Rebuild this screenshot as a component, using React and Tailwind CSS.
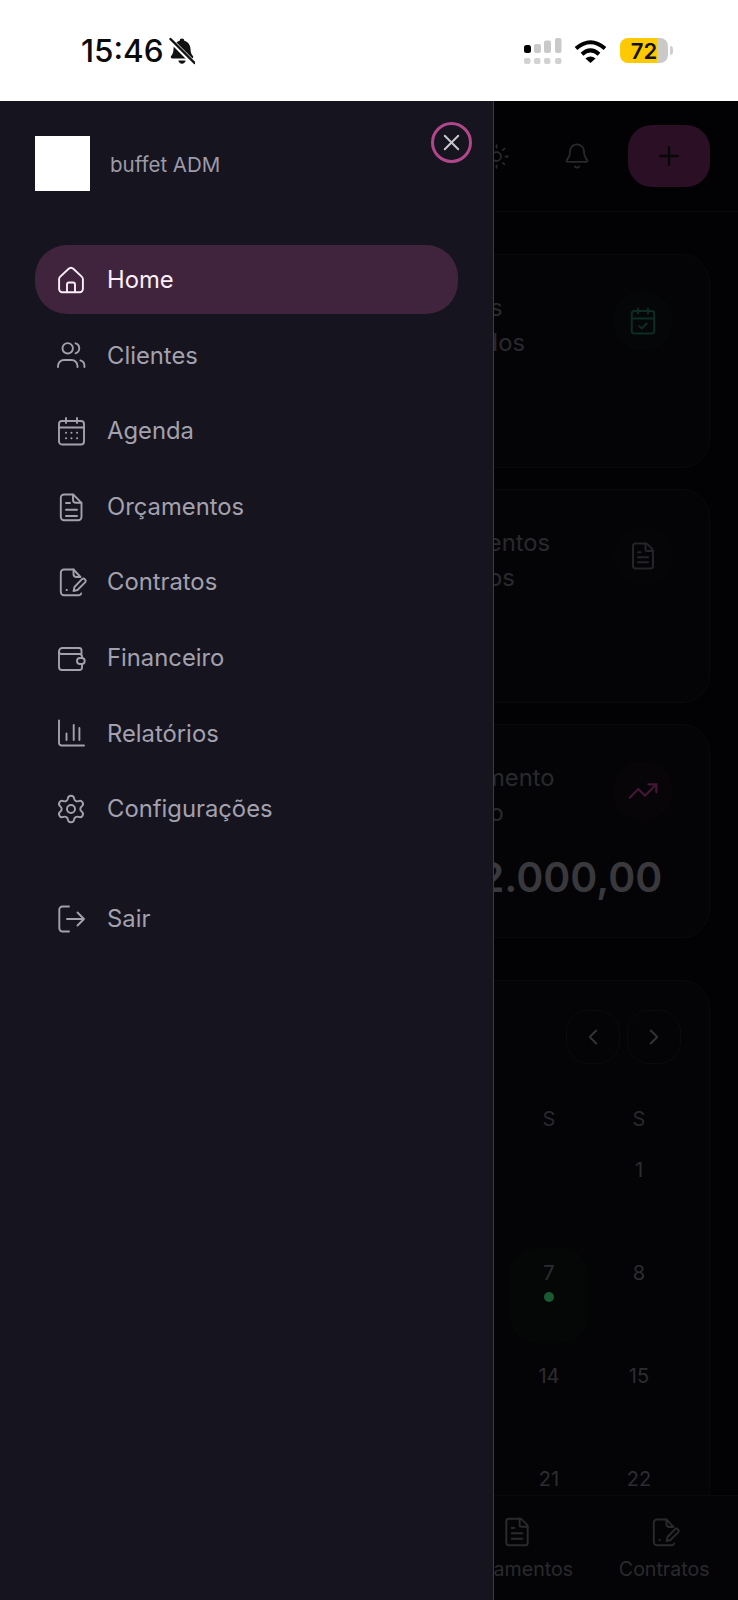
import React from "react";
import { Settings, Sun, Bell, Plus, CalendarCheck, FileText, TrendingUp, ChevronLeft, ChevronRight, X, House, Users, Calendar } from "lucide-react";

const Ico = ({ children }) => (
  <svg width="32" height="32" viewBox="0 0 32 32" fill="none" stroke="currentColor" strokeWidth="1.9" strokeLinecap="round" strokeLinejoin="round" className="shrink-0">
    {children}
  </svg>
);

const HomeI = () => (
  <Ico>
    <path d="M5.3 12.6 13.4 5a3.8 3.8 0 0 1 5.2 0l8.1 7.6a3.5 3.5 0 0 1 1.2 2.6V25a3.2 3.2 0 0 1-3.2 3.2H7.3A3.2 3.2 0 0 1 4.1 25v-9.8c0-1 .4-2 1.2-2.6Z" />
    <path d="M12 28v-7.5a2 2 0 0 1 2-2h4a2 2 0 0 1 2 2V28" />
  </Ico>
);
const UsersI = () => (
  <Ico>
    <circle cx="12.7" cy="9.3" r="5.2" />
    <path d="M3 28v-1a6 6 0 0 1 6-6h7.5a6 6 0 0 1 6 6v1" />
    <path d="M20.5 4.3a5.2 5.2 0 0 1 0 10" />
    <path d="M25.4 21.4a5.6 5.6 0 0 1 4 5.6v1" />
  </Ico>
);
const CalI = () => (
  <Ico>
    <rect x="4" y="6" width="25" height="23.5" rx="3" />
    <path d="M11 3v5M22 3v5M4 12.5h25" />
    <path d="M11 17.8h.1M16.4 17.8h.1M22 17.8h.1M11 23.2h.1M16.4 23.2h.1M22 23.2h.1" strokeWidth="2" />
  </Ico>
);
const FileI = () => (
  <Ico>
    <path d="M9 3.5h9.2l8.3 8.3V26a3.2 3.2 0 0 1-3.2 3.2H9A3.2 3.2 0 0 1 5.8 26V6.7A3.2 3.2 0 0 1 9 3.5Z" />
    <path d="M18 3.7v5.1a3 3 0 0 0 3 3h5.3" />
    <path d="M11 12h4M11 18.8h11M11 25h11" />
  </Ico>
);
const PenI = () => (
  <Ico>
    <path d="M25.5 11 18.5 3.5H9A3.2 3.2 0 0 0 5.8 6.7V26A3.2 3.2 0 0 0 9 29.2h15a2.4 2.4 0 0 0 2.2-1.7" />
    <path d="M18.5 3.5V8a3 3 0 0 0 3 3h3" />
    <path d="M11.7 24h.1" strokeWidth="2.2" />
    <path d="M27 13.2a2.2 2.2 0 0 1 3.1 3.1L22.5 24l-4 1 1-4Z" />
  </Ico>
);
const WalletI = () => (
  <Ico>
    <path d="M4 9.5V25a3 3 0 0 0 3 3h17.5a2.5 2.5 0 0 0 2.5-2.5V22" />
    <path d="M27 16v-1.5a2.5 2.5 0 0 0-2.5-2.5H6.5A2.5 2.5 0 0 1 4 9.5 3.5 3.5 0 0 1 7.5 6H24a2.5 2.5 0 0 1 2.5 2.5V12" />
    <rect x="22" y="16" width="7.7" height="6" rx="3" />
  </Ico>
);
const ChartI = () => (
  <Ico>
    <path d="M4 3.5V26a2.5 2.5 0 0 0 2.5 2.5H29" />
    <path d="M11.5 16.5V23M18.7 8v15M24.4 11v12" />
  </Ico>
);
const LogoutI = () => (
  <Ico>
    <path d="M14 3.5H7.5A3.2 3.2 0 0 0 4.3 6.7v18.6a3.2 3.2 0 0 0 3.2 3.2H14" />
    <path d="M12 16h17M22.5 9.5 29 16l-6.5 6.5" />
  </Ico>
);

const menu = [
  { label: "Home", Icon: HomeI, active: true },
  { label: "Clientes", Icon: UsersI },
  { label: "Agenda", Icon: CalI },
  { label: "Orçamentos", Icon: FileI },
  { label: "Contratos", Icon: PenI },
  { label: "Financeiro", Icon: WalletI },
  { label: "Relatórios", Icon: ChartI },
  { label: "Configurações", Icon: () => <Settings size={32} strokeWidth={1.45} className="shrink-0" /> },
];

const NavRow = ({ label, Icon, active }) => (
  <div className={`flex h-[69px] items-center gap-[20px] rounded-[32px] pl-[20px] text-[23.8px] ${active ? "bg-[#40233c] text-[#fbeff8]" : "text-[#a3a1ae]"}`}>
    <Icon />
    <span>{label}</span>
  </div>
);

const StatCard = ({ lines, value, children, tile }) => (
  <div className="flex h-[214px] shrink-0 items-start justify-between rounded-[28px] border border-[#0a0a0e] bg-[#040407] pl-[384px] pr-[36px] pt-[35px]">
    <div className="min-w-0 flex-1">
      <div className="text-[23.8px] leading-[35px] text-[#29292d]">
        <div>{lines[0]}</div>
        <div>{lines[1]}</div>
      </div>
      {value && <div className="ml-[2px] mt-[22px] whitespace-nowrap text-[41px] font-semibold leading-[50px] text-[#39393d]">{value}</div>}
    </div>
    <div className={`mt-[1px] flex h-[60px] w-[60px] shrink-0 items-center justify-center rounded-full ${tile}`}>{children}</div>
  </div>
);

const weeks = [
  ["", "", "", "", "", "", "1"],
  ["2", "3", "4", "5", "6", "7", "8"],
  ["9", "10", "11", "12", "13", "14", "15"],
  ["16", "17", "18", "19", "20", "21", "22"],
];

const SignalBars = () => (
  <svg width="38" height="26" viewBox="0 0 38 26" className="shrink-0">
    <rect x="0" y="7" width="7" height="8" rx="2.5" fill="#000" />
    <rect x="10" y="6" width="7" height="9" rx="2" fill="#c9c9c9" />
    <rect x="20" y="2.5" width="7" height="12.5" rx="2" fill="#c9c9c9" />
    <rect x="31" y="0" width="6.5" height="15" rx="2" fill="#c9c9c9" />
    {[0, 10, 20, 31].map((x) => (
      <rect key={x} x={x} y="20" width="6.5" height="6" rx="2" fill="#d2d2d2" />
    ))}
  </svg>
);

const Wifi = () => (
  <svg width="33" height="24" viewBox="0 0 33 24" fill="none" className="shrink-0">
    <path d="M2 9.5Q16.5-3 31 9.5" stroke="#000" strokeWidth="4" />
    <path d="M8 15.2Q16.5 7.5 25 15.2" stroke="#000" strokeWidth="4" />
    <path d="M11.4 19.4 16.5 24l5.1-4.6Q16.5 15.4 11.4 19.4Z" fill="#000" />
  </svg>
);

const BellOff = () => (
  <svg width="26" height="28" viewBox="0 0 26 28" className="shrink-0">
    <path d="M13 1.5c1.3 0 2.2.9 2.3 2.2 3.9 1 6 4.2 6.2 8.4.1 3.6 1 5.4 2.4 7 .8 1 .2 2.4-1.2 2.4H3.3c-1.4 0-2-1.4-1.2-2.4 1.4-1.6 2.3-3.4 2.4-7 .2-4.2 2.3-7.4 6.2-8.4.1-1.3 1-2.2 2.3-2.2Z" fill="#111" />
    <path d="M9.3 23.5h7.4c-.4 2-1.8 3.2-3.7 3.2s-3.3-1.2-3.7-3.2Z" fill="#111" />
    <path d="M1 2.5 25 26.5" stroke="#fff" strokeWidth="5" />
    <path d="M1.5 2 25.5 26" stroke="#111" strokeWidth="2.4" strokeLinecap="round" />
  </svg>
);

export default function App() {
  return (
    <div className="relative flex h-[1600px] w-[738px] flex-col overflow-hidden bg-[#020204] font-['Inter',sans-serif]">
      <div className="flex h-[101px] shrink-0 items-center justify-between bg-white pl-[81px] pr-[65px]">
        <div className="flex items-center gap-[5px]">
          <span className="text-[31.5px] font-medium leading-none text-[#0b0b0b]">15:46</span>
          <BellOff />
        </div>
        <div className="flex items-center">
          <SignalBars />
          <span className="ml-[12px]"><Wifi /></span>
          <div className="ml-[13px] flex h-[25px] w-[48px] items-center justify-center rounded-[8px] bg-[linear-gradient(90deg,#fdc900_77%,#c9c9c9_77%)] text-[22px] font-semibold leading-none text-[#111]">72</div>
          <div className="ml-[2px] h-[9px] w-[3px] rounded-r-full bg-[#cfcfcf]" />
        </div>
      </div>

      <div className="min-h-0 flex-1 overflow-hidden">
        <div className="flex h-[111px] items-center justify-end border-b border-[#0a0a0d] pr-[28px] text-[#29292d]">
          <Sun size={27} strokeWidth={1.6} />
          <Bell size={28} strokeWidth={1.6} className="ml-[53px]" />
          <div className="ml-[37px] flex h-[62px] w-[82px] items-center justify-center rounded-[24px] bg-[#2b0f24]">
            <Plus size={30} strokeWidth={2} className="text-[#08080a]" />
          </div>
        </div>

        <div className="flex flex-col gap-[21px] px-[28px] pt-[42px]">
          <StatCard lines={["Eventos", "Marcados"]} tile="bg-[#050608]">
            <CalendarCheck size={30} strokeWidth={1.6} className="text-[#0f2c22]" />
          </StatCard>
          <StatCard lines={["Orçamentos", "Enviados"]} tile="bg-[#050508]">
            <FileText size={30} strokeWidth={1.6} className="text-[#252529]" />
          </StatCard>
          <StatCard lines={["Faturamento", "Previsto"]} value="R$ 2.000,00" tile="bg-[#070508]">
            <TrendingUp size={32} strokeWidth={1.6} className="text-[#431735]" />
          </StatCard>

          <div className="mt-[21px] rounded-t-[28px] border border-[#0a0a0e] bg-[#040407] px-[25px] pt-[29px] text-[#29292d]">
            <div className="flex items-center justify-between">
              <span className="text-[24px] font-semibold">novembro 2025</span>
              <div className="flex gap-[7px] pr-[3px]">
                <div className="flex h-[54px] w-[54px] items-center justify-center rounded-[22px] border border-[#0b0b0f]"><ChevronLeft size={26} strokeWidth={1.8} className="text-[#333337]" /></div>
                <div className="flex h-[54px] w-[54px] items-center justify-center rounded-[22px] border border-[#0b0b0f]"><ChevronRight size={26} strokeWidth={1.8} className="text-[#333337]" /></div>
              </div>
            </div>
            <div className="mt-[43px] grid grid-cols-[repeat(7,90px)] text-center text-[20px] leading-[24px]">
              {["D", "S", "T", "Q", "Q", "S", "S"].map((d, i) => (
                <div key={i}>{d}</div>
              ))}
            </div>
            <div className="mt-[14px] grid grid-cols-[repeat(7,90px)] gap-y-[8px] text-center text-[20px] leading-[24px] text-[#2d2d31]">
              {weeks.flat().map((n, i) => (
                <div key={i} className={`mx-[6px] flex h-[95px] flex-col items-center rounded-[26px] pt-[13px] ${n === "7" ? "bg-[#050706]" : ""}`}>
                  <span>{n}</span>
                  {n === "7" && <span className="mt-[7px] h-[10px] w-[10px] rounded-full bg-[#1a5a30]" />}
                </div>
              ))}
            </div>
          </div>
        </div>
      </div>

      <div className="grid h-[105px] shrink-0 grid-cols-5 border-t border-[#0a0a0d] bg-[#040406] pt-[20px] text-[19.6px] leading-[24px] text-[#2a2a2d]">
        {[["Home", House], ["Clientes", Users], ["Agenda", Calendar], ["Orçamentos", FileText], ["Contratos", null]].map(([t, I]) => (
          <div key={t} className="flex flex-col items-center gap-[9px]">
            {I ? <I size={32} strokeWidth={1.5} /> : <PenI />}
            <span>{t}</span>
          </div>
        ))}
      </div>

      <aside className="absolute bottom-0 left-0 top-[101px] w-[494px] border-r-[1.5px] border-[#3b3b45] bg-[#15141f] pl-[35px] pr-[35px] pt-[35px]">
        <div className="flex items-center gap-[20px]">
          <div className="h-[55px] w-[55px] bg-white" />
          <span className="mt-[3px] text-[20.5px] text-[#9d9ba8]">buffet ADM</span>
        </div>
        <button className="absolute right-[21px] top-[21px] flex h-[41px] w-[41px] items-center justify-center rounded-full border-[3px] border-[#b0478a] text-[#c9c8cf]">
          <X size={27} strokeWidth={1.7} />
        </button>
        <nav className="mt-[54.4px] flex flex-col gap-[6.6px]">
          {menu.map((m) => (
            <NavRow key={m.label} {...m} />
          ))}
          <div className="mt-[34px]">
            <NavRow label="Sair" Icon={LogoutI} />
          </div>
        </nav>
      </aside>
    </div>
  );
}
